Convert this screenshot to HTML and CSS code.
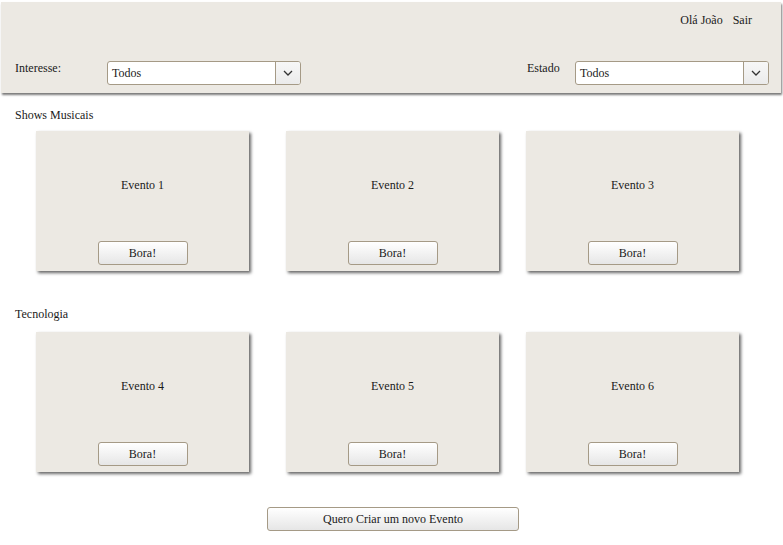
FILE: index.html
```html
<!DOCTYPE html>
<html lang="pt">
<head>
<meta charset="utf-8">
<title>Eventos</title>
<link rel="stylesheet" href="styles.css">
</head>
<body>
<header class="header">
  <div class="user"><span>Olá João</span><span>Sair</span></div>
  <div class="filters">
    <div class="filter">
      <span class="label label-int">Interesse:</span>
      <div class="select"><span class="select-text">Todos</span><span class="select-btn"><svg width="10" height="6" viewBox="0 0 10 6"><path d="M1 1 L5 5 L9 1" fill="none" stroke="#333" stroke-width="1.3"/></svg></span></div>
    </div>
    <div class="filter">
      <span class="label label-est">Estado</span>
      <div class="select"><span class="select-text">Todos</span><span class="select-btn"><svg width="10" height="6" viewBox="0 0 10 6"><path d="M1 1 L5 5 L9 1" fill="none" stroke="#333" stroke-width="1.3"/></svg></span></div>
    </div>
  </div>
</header>

<section class="section">
  <h2 class="section-title">Shows Musicais</h2>
  <div class="cards">
    <div class="card"><span class="card-title">Evento 1</span><button class="btn btn-bora">Bora!</button></div>
    <div class="card"><span class="card-title">Evento 2</span><button class="btn btn-bora">Bora!</button></div>
    <div class="card"><span class="card-title">Evento 3</span><button class="btn btn-bora">Bora!</button></div>
  </div>
</section>

<section class="section section-2">
  <h2 class="section-title">Tecnologia</h2>
  <div class="cards">
    <div class="card"><span class="card-title">Evento 4</span><button class="btn btn-bora">Bora!</button></div>
    <div class="card"><span class="card-title">Evento 5</span><button class="btn btn-bora">Bora!</button></div>
    <div class="card"><span class="card-title">Evento 6</span><button class="btn btn-bora">Bora!</button></div>
  </div>
</section>

<div class="create">
  <button class="btn btn-create">Quero Criar um novo Evento</button>
</div>
</body>
</html>
```

FILE: styles.css
```css
html, body {
  margin: 0;
  padding: 0;
  background: #ffffff;
  font-family: "Liberation Serif", "Times New Roman", serif;
  font-size: 12px;
  color: #1a1a1a;
}

.header {
  margin: 2px 2px 0 1px;
  height: 91px;
  box-sizing: border-box;
  background: #ece9e3;
  box-shadow: 1px 2px 2px #7a7a7a;
  padding: 11px 12px 0 14px;
}

.user {
  display: flex;
  justify-content: flex-end;
  gap: 10px;
  padding-right: 17px;
  line-height: 14px;
}

.filters {
  display: flex;
  justify-content: space-between;
  margin-top: 34px;
}

.filter {
  display: flex;
  align-items: flex-start;
}

.label {
  line-height: 14px;
}

.label-int {
  width: 92px;
}

.label-est {
  width: 48px;
}

.select {
  width: 194px;
  height: 24px;
  box-sizing: border-box;
  border: 1px solid #a59a86;
  border-radius: 3px;
  background: #ffffff;
  display: flex;
  overflow: hidden;
}

.select-text {
  flex: 1;
  padding-left: 4px;
  line-height: 22px;
}

.select-btn {
  width: 24px;
  border-left: 1px solid #a59a86;
  background: linear-gradient(#f7f7f7, #ebebeb);
  display: flex;
  align-items: center;
  justify-content: center;
}

.section {
  margin-top: 15px;
}

.section-2 {
  margin-top: 36px;
}

.section-title {
  margin: 0 0 0 15px;
  font-size: 12px;
  font-weight: normal;
  line-height: 14px;
}

.cards {
  display: grid;
  grid-template-columns: 250px 240px 214px;
  margin: 9px 0 0 36px;
}

.section-2 .cards {
  margin-top: 11px;
}

.card {
  width: 213px;
  height: 140px;
  box-sizing: border-box;
  background: #ece9e3;
  box-shadow: 2px 2px 3px #666;
  display: flex;
  flex-direction: column;
  align-items: center;
  padding-top: 47px;
  padding-bottom: 6px;
}

.card-title {
  line-height: 14px;
}

.btn {
  font-family: "Liberation Serif", "Times New Roman", serif;
  font-size: 12px;
  color: #1a1a1a;
  height: 24px;
  border: 1px solid #a59a86;
  border-radius: 3px;
  background: linear-gradient(#ffffff, #e6e6e6);
  padding: 0;
}

.btn-bora {
  margin-top: auto;
  width: 90px;
}

.create {
  display: flex;
  margin: 35px 0 0 267px;
}

.btn-create {
  width: 252px;
}
```
